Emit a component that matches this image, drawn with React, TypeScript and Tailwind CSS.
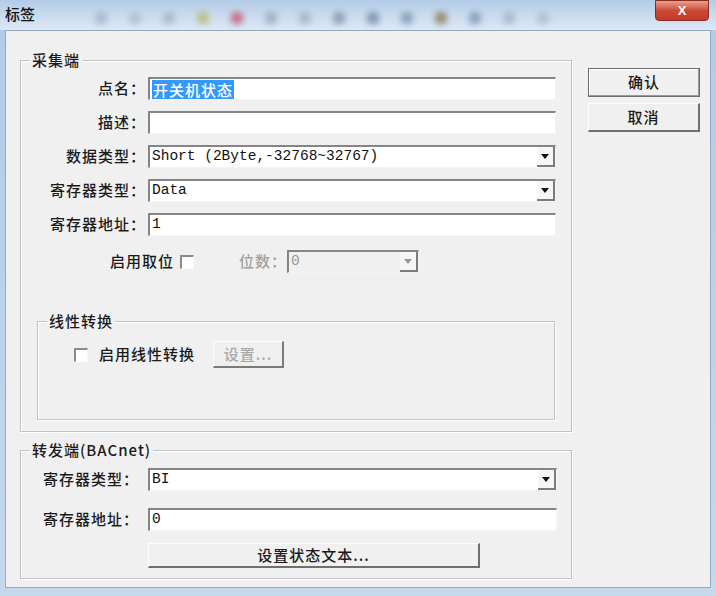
import React from 'react';

const cjk = "font-['Noto_Sans_CJK_SC',sans-serif] font-medium";
const mono = "font-['Liberation_Mono','Noto_Sans_CJK_SC',monospace]";

function Arrow({ disabled }: { disabled?: boolean }) {
  return (
    <div className="w-[18px] h-full flex items-center justify-center border-b-2 border-r-2 border-[#7c7c7c] bg-[#f6f6f6]">
      <svg width="8" height="5" viewBox="0 0 8 5">
        <path d="M0 0 L8 0 L4 5 Z" fill={disabled ? '#9a9a9a' : '#111'} />
      </svg>
    </div>
  );
}

function Field({
  value,
  combo,
  selected,
  disabled,
  className,
}: {
  value?: string;
  combo?: boolean;
  selected?: boolean;
  disabled?: boolean;
  className?: string;
}) {
  return (
    <div
      className={`h-[23px] flex items-stretch border-t-2 border-l-2 border-t-[#858585] border-l-[#858585] border-b border-r border-b-[#f4f4f4] border-r-[#f4f4f4] ${
        disabled ? 'bg-[#f0f0f0]' : 'bg-white'
      } ${className ?? ''}`}
    >
      <div className="flex-1 flex items-center pl-[2px] overflow-hidden">
        {selected ? (
          <span className={`${cjk} text-[15px] tracking-[1px] leading-[19px] bg-[#3399ff] text-white px-[1px]`}>{value}</span>
        ) : (
          <span className={`${mono} text-[14.5px] whitespace-pre ${disabled ? 'text-[#9a9a9a]' : 'text-[#111]'}`}>{value}</span>
        )}
      </div>
      {combo && <Arrow disabled={disabled} />}
    </div>
  );
}

function Check({ className }: { className?: string }) {
  return (
    <div
      className={`w-[14px] h-[14px] bg-white border-t-2 border-l-2 border-t-[#8a8a8a] border-l-[#8a8a8a] border-b border-r border-[#f8f8f8] ${className ?? ''}`}
    />
  );
}

function Label({ text, className }: { text: string; className?: string }) {
  return (
    <div className={`${cjk} text-[15px] tracking-[1px] text-[#1b1b1b] text-right whitespace-nowrap ${className ?? ''}`}>
      {text}
    </div>
  );
}

function Group({ title, className, children }: { title: string; className?: string; children: React.ReactNode }) {
  return (
    <fieldset className={`border border-[#c2c2c2] shadow-[inset_1px_1px_0_#ffffff,1px_1px_0_#ffffff] ${className ?? ''}`}>
      <legend className={`${cjk} ml-[9px] px-[2px] text-[15px] tracking-[1px] leading-[18px] text-[#1b1b1b]`}>{title}</legend>
      {children}
    </fieldset>
  );
}

export default function App() {
  const rows: { label: string; value: string; combo?: boolean; selected?: boolean }[] = [
    { label: '点名：', value: '开关机状态', selected: true },
    { label: '描述：', value: '' },
    { label: '数据类型：', value: 'Short (2Byte,-32768~32767)', combo: true },
    { label: '寄存器类型：', value: 'Data', combo: true },
    { label: '寄存器地址：', value: '1' },
  ];

  const blobs = ['#9fb3c9', '#a9bccf', '#9fb4c4', '#b8b86e', '#c2566b', '#93a9c0', '#9cb1c5', '#7d93ad', '#6f87a3', '#7c95ae', '#8a7a55', '#7d93b3', '#9db3cb', '#a7bcd2'];

  return (
    <div className="w-[716px] h-[596px] bg-linear-to-b from-[#b2cbe8] to-[#c6d8ed] flex flex-col overflow-hidden">
      {/* title bar */}
      <div className="h-[30px] flex items-start bg-linear-to-b from-[#b3cbe7] via-[#c9dbef] to-[#dde8f4]">
        <div className={`${cjk} pl-[5px] pt-[3px] text-[15px] text-[#111] w-[95px]`}>标签</div>
        <div className="flex gap-[22px] pt-[12px] blur-[3px] opacity-80">
          {blobs.map((c, i) => (
            <div key={i} className="w-[12px] h-[12px] rounded-sm" style={{ backgroundColor: c }} />
          ))}
        </div>
        <div className="ml-auto mr-[7px] w-[54px] h-[21px] rounded-b-[4px] border border-[#8a2b20] bg-linear-to-b from-[#e9a08f] via-[#cc4a36] to-[#c2392a] flex items-center justify-center">
          <span className="font-['Liberation_Sans',sans-serif] font-bold text-white text-[13px] leading-none">X</span>
        </div>
      </div>

      {/* body */}
      <div className="mx-[5px] mb-[8px] flex-1 bg-[#f0f0f0] border border-[#97a9bd] flex">
        <div className="pl-[14px] pt-[20px]">
          <Group title="采集端" className="w-[552px] pb-[11px]">
            <div className="flex flex-col gap-[11px] pt-[8px]">
              {rows.map((r) => (
                <div key={r.label} className="flex items-center">
                  <Label text={r.label} className="w-[125px]" />
                  <Field value={r.value} combo={r.combo} selected={r.selected} className="ml-[2px] w-[408px]" />
                </div>
              ))}
            </div>

            <div className="mt-[14px] h-[23px] flex items-center pl-[89px]">
              <Label text="启用取位" />
              <Check className="ml-[6px]" />
              <div className={`${cjk} ml-[45px] text-[15px] tracking-[1px] text-[#a0a0a0]`}>位数：</div>
              <Field value="0" combo disabled className="w-[132px]" />
            </div>

            <Group title="线性转换" className="mt-[39px] ml-[16px] w-[518px] h-[108px]">
              <div className="pt-[11px] flex items-center">
                <Check className="ml-[36px] w-[13px] h-[13px]" />
                <Label text="启用线性转换" className="ml-[11px]" />
                <div
                  className={`${cjk} ml-[18px] w-[71px] h-[27px] flex items-center justify-center text-[15px] tracking-[1px] text-[#a8a8a8] bg-[#f0f0f0] border-t border-l border-[#fdfdfd] border-b-2 border-r-2 border-b-[#7a7a7a] border-r-[#7a7a7a]`}
                >
                  设置...
                </div>
              </div>
            </Group>
          </Group>

          <Group title="转发端(BACnet)" className="mt-[9px] w-[552px] pb-[10px]">
            <div className="flex flex-col gap-[17px] pt-[9px]">
              <div className="flex items-center">
                <Label text="寄存器类型：" className="w-[118px]" />
                <Field value="BI" combo className="ml-[9px] w-[409px]" />
              </div>
              <div className="flex items-center">
                <Label text="寄存器地址：" className="w-[118px]" />
                <Field value="0" className="ml-[9px] w-[409px]" />
              </div>
            </div>
            <div
              className={`${cjk} mt-[12px] ml-[127px] w-[332px] h-[25px] flex items-center justify-center text-[15px] tracking-[1px] text-[#1b1b1b] bg-[#f0f0f0] border-t border-l border-[#fdfdfd] border-b-2 border-r-2 border-b-[#6f6f6f] border-r-[#6f6f6f]`}
            >
              设置状态文本...
            </div>
          </Group>
        </div>

        <div className="ml-[16px] pt-[37px] flex flex-col gap-[6px]">
          <div
            className={`${cjk} w-[112px] h-[29px] flex items-center justify-center text-[15px] tracking-[1px] text-[#1b1b1b] bg-[#f0f0f0] border border-[#6c6c6c] shadow-[inset_-1px_-1px_0_#9a9a9a,inset_1px_1px_0_#ffffff]`}
          >
            确认
          </div>
          <div
            className={`${cjk} w-[112px] h-[29px] flex items-center justify-center text-[15px] tracking-[1px] text-[#1b1b1b] bg-[#f0f0f0] border-t border-l border-[#fdfdfd] border-b-2 border-r-2 border-b-[#6f6f6f] border-r-[#6f6f6f]`}
          >
            取消
          </div>
        </div>
      </div>
    </div>
  );
}
